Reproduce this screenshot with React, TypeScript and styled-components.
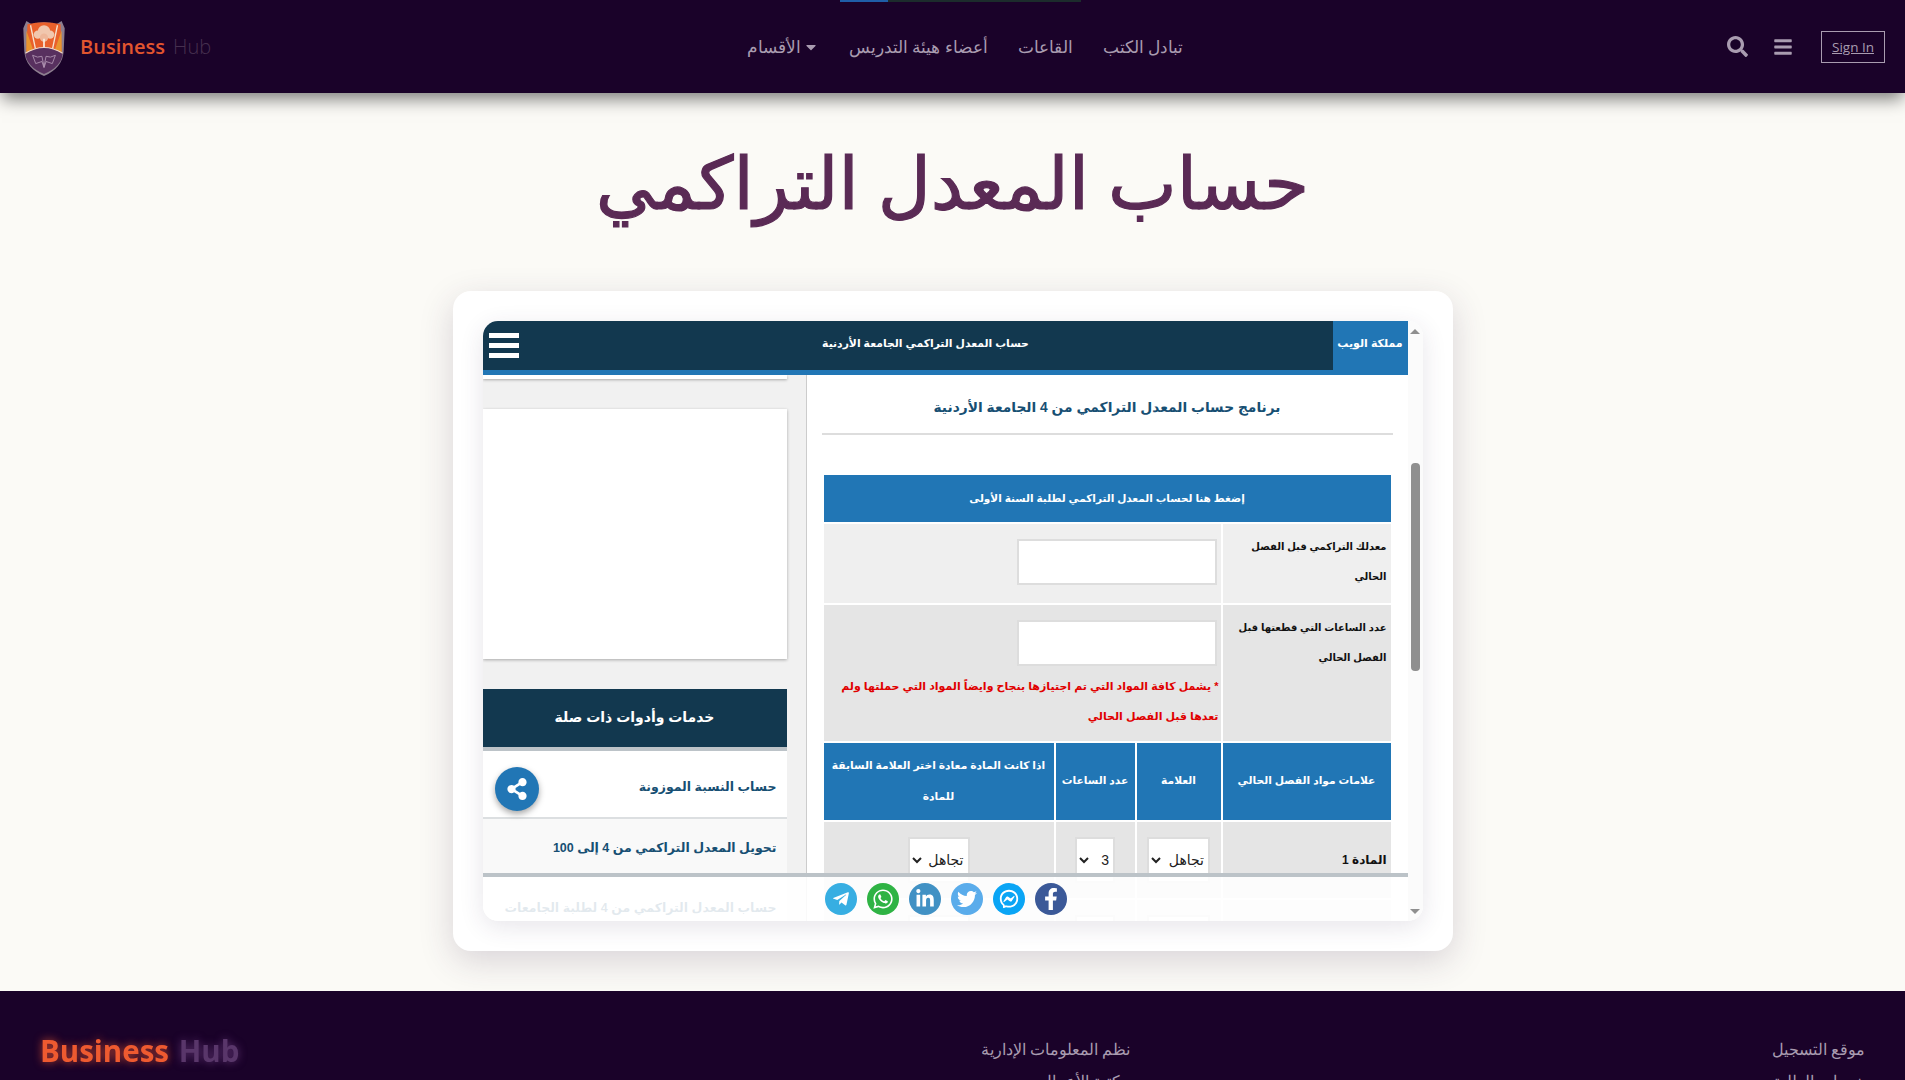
import React from "react";
import styled, { createGlobalStyle } from "styled-components";
import { FaSearch, FaBars, FaCaretDown, FaTelegramPlane, FaWhatsapp, FaLinkedinIn, FaTwitter, FaFacebookF, FaShareAlt } from "react-icons/fa";
import { RiMessengerLine } from "react-icons/ri";

const Global = createGlobalStyle`
  html, body { margin: 0; padding: 0; background: #fbfaf6; }
  * { box-sizing: border-box; }
`;

const Page = styled.div`
  position: relative;
  height: 1080px;
  overflow: hidden;
  background: #fbfaf6;
  font-family: "Open Sans", "DejaVu Sans", sans-serif;
`;

const TopLoader = styled.div`
  position: absolute;
  z-index: 3;
  top: 0;
  left: 840px;
  width: 241px;
  height: 2px;
  background: linear-gradient(to right, #1f5ea8 48px, #1c2c2c 48px);
`;

const Header = styled.header`
  position: relative;
  z-index: 2;
  display: flex;
  align-items: center;
  height: 93px;
  padding: 0 20px 0 22px;
  background: #1a0229;
  box-shadow: 0 8px 16px -2px rgba(0, 0, 0, 0.5);
`;

const Brand = styled.div`
  display: flex;
  align-items: center;
  gap: 14px;
  width: 731px;
`;

const BrandName = styled.span`
  font-size: 20px;
  font-weight: 600;
  color: #e2552f;
  word-spacing: 3px;
`;

const BrandSoft = styled.span`
  font-weight: 300;
  color: #46304f;
`;

const Nav = styled.nav`
  display: flex;
  direction: rtl;
  gap: 30px;
  width: 430px;
  font-size: 16.5px;
  font-weight: 300;
  color: #a99cb0;
`;

const NavItem = styled.span`
  display: inline-flex;
  align-items: center;
  gap: 2px;
  white-space: nowrap;
`;

const Tools = styled.div`
  display: flex;
  align-items: center;
  margin-left: auto;
  color: #a99cb0;
`;

const ToolIcon = styled.span<{ $size: number }>`
  display: inline-flex;
  margin-right: 25px;
  font-size: ${(p) => p.$size}px;
`;

const SignIn = styled.a`
  display: flex;
  align-items: center;
  justify-content: center;
  width: 64px;
  height: 32px;
  margin-left: 3px;
  border: 1px solid #a99cb0;
  font-size: 13.5px;
  text-decoration: underline;
  color: #a99cb0;
`;

const Title = styled.h1`
  margin: 0;
  padding-top: 34px;
  height: 198px;
  direction: rtl;
  text-align: center;
  font-size: 73px;
  line-height: 108px;
  font-weight: 400;
  color: #5a2a55;
  -webkit-text-stroke: 1.2px #5a2a55;
`;

const Card = styled.section`
  width: 1000px;
  height: 660px;
  margin: 0 auto;
  padding: 30px;
  background: #fff;
  border-radius: 18px;
  box-shadow: 0 10px 34px rgba(60, 40, 80, 0.18);
`;

const Frame = styled.div`
  position: relative;
  display: flex;
  width: 940px;
  height: 600px;
  overflow: hidden;
  background: #fff;
  border-radius: 15px;
  box-shadow: 0 6px 24px rgba(60, 40, 80, 0.12);
  font-family: "Liberation Sans", "DejaVu Sans", sans-serif;
`;

const Content = styled.div`
  width: 925px;
  direction: rtl;
`;

const FrameBar = styled.div`
  display: flex;
  align-items: stretch;
  height: 54px;
  background: #12384f;
  border-bottom: 5px solid #2176b5;
  color: #fff;
  font-weight: 700;
`;

const SiteTag = styled.div`
  display: flex;
  align-items: center;
  justify-content: center;
  width: 75px;
  padding-bottom: 4px;
  background: #2176b5;
  font-size: 11px;
  white-space: nowrap;
`;

const FrameTitle = styled.div`
  flex: 1;
  display: flex;
  align-items: center;
  justify-content: center;
  padding-bottom: 4px;
  font-size: 10.8px;
`;

const Burger = styled.div`
  display: flex;
  flex-direction: column;
  justify-content: center;
  gap: 5px;
  width: 36px;
  padding-left: 6px;
  direction: ltr;
  & > i {
    display: block;
    width: 30px;
    height: 5px;
    background: #fff;
  }
`;

const Body = styled.div`
  display: grid;
  grid-template-columns: 601px 324px;
  height: 546px;
`;

const Main = styled.main`
  background: #fff;
`;

const Heading = styled.h2`
  display: flex;
  align-items: center;
  justify-content: center;
  height: 60px;
  margin: 0 15px 40px;
  padding-top: 6px;
  border-bottom: 2px solid #ddd;
  font-size: 13.8px;
  color: #174f73;
`;

const CalcGrid = styled.div`
  display: grid;
  grid-template-columns: 168px 84px 79px 230px;
  grid-template-rows: 47px 79px 136px 77px 76px 76px;
  gap: 2px;
  margin: 0 17px;
`;

const Banner = styled.div`
  grid-column: 1 / -1;
  display: flex;
  align-items: center;
  justify-content: center;
  padding-bottom: 2px;
  background: #2176b5;
  color: #fff;
  font-size: 10.5px;
  font-weight: 700;
`;

const Label = styled.div<{ $bg: string }>`
  padding: 8px 4px 0;
  background: ${(p) => p.$bg};
  font-size: 10px;
  font-weight: 700;
  line-height: 30px;
  color: #111;
`;

const Wide = styled.div<{ $bg: string }>`
  grid-column: span 3;
  padding: 15px 4px 0;
  background: ${(p) => p.$bg};
`;

const TextBox = styled.input`
  display: block;
  width: 200px;
  height: 46px;
  border: 2px solid #ddd;
  background: #fff;
`;

const Note = styled.p`
  margin: 5px -2px 0 0;
  font-size: 11px;
  font-weight: 700;
  line-height: 30px;
  color: #e00000;
`;

const HeadCell = styled.div`
  display: flex;
  align-items: center;
  justify-content: center;
  padding: 0 2px 2px;
  background: #2176b5;
  color: #fff;
  text-align: center;
  font-size: 10.7px;
  font-weight: 700;
  line-height: 31px;
`;

const SubjectCell = styled.div<{ $bg: string }>`
  display: flex;
  align-items: center;
  padding: 0 4px;
  background: ${(p) => p.$bg};
  font-size: 12px;
  font-weight: 700;
  color: #111;
`;

const SelectCell = styled.div<{ $bg: string }>`
  display: flex;
  justify-content: center;
  padding-top: 15px;
  background: ${(p) => p.$bg};
`;

const Pick = styled.select<{ $w: number }>`
  width: ${(p) => p.$w}px;
  height: 46px;
  border: 2px solid #ddd;
  background: #fff;
  font-family: "Liberation Sans", "DejaVu Sans", sans-serif;
  font-size: 14px;
  color: #222;
`;

const Side = styled.aside`
  height: 546px;
  padding-right: 19px;
  overflow: hidden;
  background: #f1f1f1;
  border-right: 1px solid #ccc;
`;

const SideSliver = styled.div`
  height: 4px;
  margin-bottom: 30px;
  background: #fff;
  box-shadow: 0 1px 3px rgba(0, 0, 0, 0.3);
`;

const AdBox = styled.div`
  height: 250px;
  margin-bottom: 30px;
  background: #fff;
  box-shadow: 0 1px 3px rgba(0, 0, 0, 0.3);
`;

const SideHead = styled.div`
  display: flex;
  align-items: center;
  justify-content: center;
  height: 62px;
  padding-bottom: 2px;
  background: #12384f;
  border-bottom: 4px solid #bcc3c8;
  color: #fff;
  font-size: 14px;
  font-weight: 700;
`;

const SideRow = styled.div<{ $bg: string; $h: number; $top: number }>`
  display: flex;
  align-items: center;
  height: ${(p) => p.$h}px;
  padding: ${(p) => p.$top}px 10px 0;
  background: ${(p) => p.$bg};
  border-bottom: 2px solid #dcdfe1;
  color: #174f73;
  font-size: 12.5px;
  font-weight: 700;
`;

const Scroll = styled.div`
  flex: 1;
  display: flex;
  flex-direction: column;
  align-items: center;
  padding: 8px 0 7px;
  background: #fbfbfb;
`;

const ArrowUp = styled.i`
  width: 0;
  height: 0;
  border: 5px solid transparent;
  border-top: 0;
  border-bottom: 5px solid #8f8f8f;
`;

const ArrowDown = styled.i`
  width: 0;
  height: 0;
  margin-top: auto;
  border: 5px solid transparent;
  border-bottom: 0;
  border-top: 5px solid #8f8f8f;
`;

const Thumb = styled.div`
  width: 9px;
  height: 208px;
  margin-top: 129px;
  border-radius: 4px;
  background: #8f8f8f;
`;

const ShareFab = styled.div`
  position: absolute;
  left: 12px;
  top: 446px;
  display: flex;
  align-items: center;
  justify-content: center;
  width: 44px;
  height: 44px;
  border-radius: 50%;
  background: #2176b5;
  box-shadow: 0 3px 6px rgba(0, 0, 0, 0.35);
  color: #fff;
  font-size: 22px;
`;

const ShareBar = styled.div`
  position: absolute;
  left: 0;
  right: 15px;
  top: 552px;
  height: 48px;
  display: flex;
  align-items: center;
  gap: 10px;
  padding: 0 0 0 342px;
  border-top: 4px solid #bcc3c8;
  background: rgba(255, 255, 255, 0.88);
`;

const Social = styled.span<{ $bg: string; $size: number }>`
  display: flex;
  align-items: center;
  justify-content: center;
  width: 32px;
  height: 32px;
  border-radius: 50%;
  background: ${(p) => p.$bg};
  color: #fff;
  font-size: ${(p) => p.$size}px;
`;

const Footer = styled.footer`
  display: flex;
  height: 200px;
  margin-top: 40px;
  padding: 42px 40px 0;
  background: #1a0229;
`;

const FooterBrand = styled.div`
  width: 600px;
  padding-top: 1px;
  font-size: 29.5px;
  line-height: 34px;
  font-weight: 700;
  color: #ee5a30;
  word-spacing: 2px;
  text-shadow: 0 0 9px rgba(238, 90, 48, 0.75);
  filter: blur(0.5px);
`;

const FooterSoft = styled.span`
  color: #59366a;
  text-shadow: 0 0 9px rgba(120, 70, 140, 0.7);
`;

const FooterCol = styled.div<{ $left: string }>`
  margin-left: ${(p) => p.$left};
  direction: rtl;
  font-size: 16px;
  line-height: 32px;
  font-weight: 300;
  color: #a99cb0;
  white-space: nowrap;
`;

const FooterLine = styled.div`
  direction: rtl;
`;

function Crest() {
  return (
    <svg width="44" height="58" viewBox="0 0 42 56">
      <path d="M4 3 L9 6 Q21 2 33 6 L38 3 L41 10 L40 32 Q39 48 21 56 Q3 48 2 32 L1 10 Z" fill="#8d7e8f" />
      <path d="M5 6 Q21 2 37 6 L38 32 L4 32 Z" fill="#e9602b" />
      <path d="M4 12 L11 32 L4 34 Z M38 12 L31 32 L38 34 Z" fill="#e9952f" />
      <path d="M8 7 L13 31 M34 7 L29 31" stroke="#f6e2d0" strokeWidth="1.3" />
      <circle cx="21" cy="13" r="6" fill="#f1c7ae" />
      <circle cx="15" cy="16" r="4" fill="#f1c7ae" />
      <circle cx="27" cy="16" r="4" fill="#f1c7ae" />
      <circle cx="21" cy="19" r="4" fill="#eeb79a" />
      <path d="M20.2 20 H21.8 V30 H20.2 Z" fill="#fbeee2" />
      <path d="M3 34 Q21 23 39 34 Q38 47 21 54 Q4 47 3 34 Z" fill="#58305f" />
      <path d="M3 34 Q21 23 39 34" fill="none" stroke="#f1d9c8" strokeWidth="1" />
      <path d="M10 36 Q15 39 19 37 L21 47 L23 37 Q27 39 32 36 L29 44 L23 42 L21 48 L19 42 L13 44 Z" fill="none" stroke="#b59ab7" strokeWidth="0.8" />
    </svg>
  );
}

export default function App() {
  return (
    <Page>
      <Global />
      <TopLoader />
      <Header>
        <Brand>
          <Crest />
          <BrandName>
            Business <BrandSoft>Hub</BrandSoft>
          </BrandName>
        </Brand>
        <Nav>
          <NavItem>تبادل الكتب</NavItem>
          <NavItem>القاعات</NavItem>
          <NavItem>أعضاء هيئة التدريس</NavItem>
          <NavItem>
            <FaCaretDown size={16} />
            الأقسام
          </NavItem>
        </Nav>
        <Tools>
          <ToolIcon $size={21}>
            <FaSearch />
          </ToolIcon>
          <ToolIcon $size={20}>
            <FaBars />
          </ToolIcon>
          <SignIn>Sign In</SignIn>
        </Tools>
      </Header>

      <Title>حساب المعدل التراكمي</Title>

      <Card>
        <Frame>
          <Content>
            <FrameBar>
              <SiteTag>مملكة الويب</SiteTag>
              <FrameTitle>حساب المعدل التراكمي الجامعة الأردنية</FrameTitle>
              <Burger>
                <i />
                <i />
                <i />
              </Burger>
            </FrameBar>
            <Body>
              <Main>
                <Heading>برنامج حساب المعدل التراكمي من 4 الجامعة الأردنية</Heading>
                <CalcGrid>
                  <Banner>إضغط هنا لحساب المعدل التراكمي لطلبة السنة الأولى</Banner>
                  <Label $bg="#efefef">معدلك التراكمي قبل الفصل الحالي</Label>
                  <Wide $bg="#efefef">
                    <TextBox />
                  </Wide>
                  <Label $bg="#e5e5e5">عدد الساعات التي قطعتها قبل الفصل الحالي</Label>
                  <Wide $bg="#e5e5e5">
                    <TextBox />
                    <Note>* يشمل كافة المواد التي تم اجتيازها بنجاح وايضاً المواد التي حملتها ولم تعدها قبل الفصل الحالي</Note>
                  </Wide>
                  <HeadCell>علامات مواد الفصل الحالي</HeadCell>
                  <HeadCell>العلامة</HeadCell>
                  <HeadCell>عدد الساعات</HeadCell>
                  <HeadCell>اذا كانت المادة معادة اختر العلامة السابقة للمادة</HeadCell>
                  {["#e5e5e5", "#efefef"].map((bg, i) => (
                    <React.Fragment key={bg}>
                      <SubjectCell $bg={bg}>المادة {i + 1}</SubjectCell>
                      <SelectCell $bg={bg}>
                        <Pick $w={63}>
                          <option>تجاهل</option>
                        </Pick>
                      </SelectCell>
                      <SelectCell $bg={bg}>
                        <Pick $w={40}>
                          <option>3</option>
                        </Pick>
                      </SelectCell>
                      <SelectCell $bg={bg}>
                        <Pick $w={62}>
                          <option>تجاهل</option>
                        </Pick>
                      </SelectCell>
                    </React.Fragment>
                  ))}
                </CalcGrid>
              </Main>
              <Side>
                <SideSliver />
                <AdBox />
                <SideHead>خدمات وأدوات ذات صلة</SideHead>
                <SideRow $bg="#fff" $h={68} $top={5}>حساب النسبة الموزونة</SideRow>
                <SideRow $bg="#f9f9f9" $h={58} $top={0}>تحويل المعدل التراكمي من 4 إلى 100</SideRow>
                <SideRow $bg="#fff" $h={62} $top={0}>حساب المعدل التراكمي من 4 لطلبة الجامعات</SideRow>
              </Side>
            </Body>
          </Content>
          <Scroll>
            <ArrowUp />
            <Thumb />
            <ArrowDown />
          </Scroll>
          <ShareFab>
            <FaShareAlt />
          </ShareFab>
          <ShareBar>
            <Social $bg="#37aee2" $size={18}>
              <FaTelegramPlane />
            </Social>
            <Social $bg="#2fb344" $size={22}>
              <FaWhatsapp />
            </Social>
            <Social $bg="#4191c4" $size={20}>
              <FaLinkedinIn />
            </Social>
            <Social $bg="#5aaceb" $size={20}>
              <FaTwitter />
            </Social>
            <Social $bg="#0aa5f5" $size={22}>
              <RiMessengerLine />
            </Social>
            <Social $bg="#3b5998" $size={22}>
              <FaFacebookF />
            </Social>
          </ShareBar>
        </Frame>
      </Card>

      <Footer>
        <FooterBrand>
          Business <FooterSoft>Hub</FooterSoft>
        </FooterBrand>
        <FooterCol $left="341px">
          <FooterLine>نظم المعلومات الإدارية</FooterLine>
          <FooterLine>مكتبة الأعمال</FooterLine>
        </FooterCol>
        <FooterCol $left="auto">
          <FooterLine>موقع التسجيل</FooterLine>
          <FooterLine>خدمات الطلبة</FooterLine>
        </FooterCol>
      </Footer>
    </Page>
  );
}
